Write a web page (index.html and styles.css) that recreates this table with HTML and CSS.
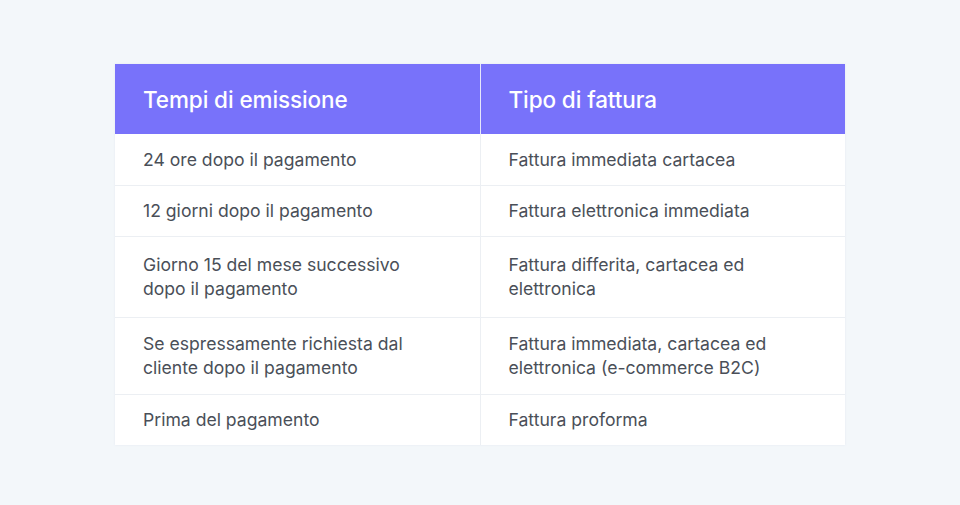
FILE: index.html
```html
<!DOCTYPE html>
<html lang="it">
<head>
<meta charset="utf-8">
<link rel="stylesheet" href="styles.css">
</head>
<body>
<main class="page">
  <table class="invoice-table">
    <thead>
      <tr>
        <th>Tempi di emissione</th>
        <th>Tipo di fattura</th>
      </tr>
    </thead>
    <tbody>
      <tr class="row-first">
        <td>24 ore dopo il pagamento</td>
        <td>Fattura immediata cartacea</td>
      </tr>
      <tr>
        <td>12 giorni dopo il pagamento</td>
        <td>Fattura elettronica immediata</td>
      </tr>
      <tr class="row-tall">
        <td>Giorno 15 del mese successivo<br>dopo il pagamento</td>
        <td>Fattura differita, cartacea ed<br>elettronica</td>
      </tr>
      <tr class="row-tall2">
        <td>Se espressamente richiesta dal<br>cliente dopo il pagamento</td>
        <td>Fattura immediata, cartacea ed<br>elettronica (e-commerce B2C)</td>
      </tr>
      <tr class="row-last">
        <td>Prima del pagamento</td>
        <td>Fattura proforma</td>
      </tr>
    </tbody>
  </table>
</main>
</body>
</html>
```

FILE: styles.css
```css
* { box-sizing: border-box; }
html, body {
  margin: 0;
  padding: 0;
  background: #f3f7fa;
  height: 100%;
}
.page {
  padding: 64px 0 0 115px;
}
.invoice-table {
  width: 730px;
  border-collapse: collapse;
  table-layout: fixed;
  font-family: Inter, "Noto Sans", sans-serif;
  background: #ffffff;
  box-shadow: 0 0 2px rgba(200, 210, 225, 0.35);
}
.invoice-table th {
  background: #7872fa;
  color: #ffffff;
  font-weight: 500;
  font-size: 22.5px;
  text-align: left;
  height: 70px;
  padding: 0 28px;
  letter-spacing: -0.1px;
}
.invoice-table th + th {
  border-left: 1px solid #e6e7fb;
}
.invoice-table td {
  color: #4a4f58;
  font-size: 17.6px;
  line-height: 24px;
  padding: 13px 28px;
  border-bottom: 1px solid #eceff3;
  vertical-align: middle;
}
.invoice-table td + td {
  border-left: 1px solid #eceff3;
}
.invoice-table .row-first td {
  padding-top: 14px;
  padding-bottom: 13px;
}
.invoice-table .row-tall td {
  padding-top: 16px;
  padding-bottom: 16px;
}
.invoice-table .row-tall2 td {
  padding-top: 14px;
  padding-bottom: 14px;
}
.invoice-table .row-last td {
  border-bottom: none;
}
```
